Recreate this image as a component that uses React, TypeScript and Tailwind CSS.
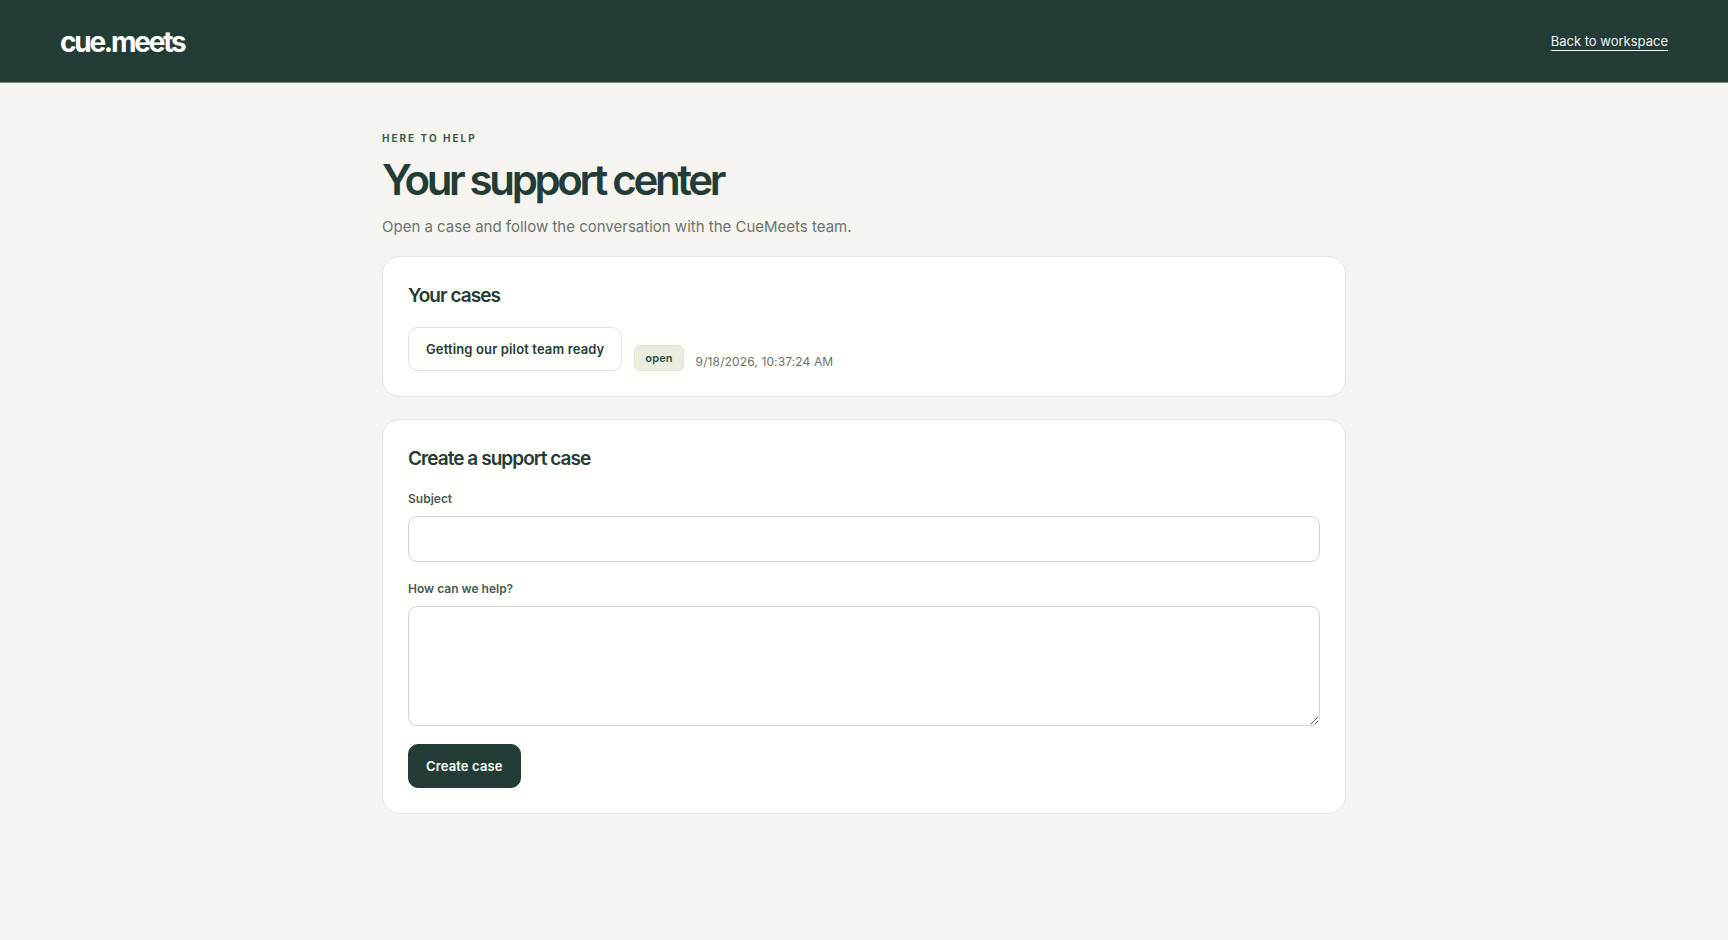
import { useState } from "react";
import type { FormEvent } from "react";

interface SupportCase {
  id: string;
  subject: string;
  status: string;
  updatedAt: string;
}

const cases: SupportCase[] = [
  {
    id: "pilot-team",
    subject: "Getting our pilot team ready",
    status: "open",
    updatedAt: "9/18/2026, 10:37:24 AM",
  },
];

function Header() {
  return (
    <header className="flex items-center justify-between border-b border-[#7c8b82] bg-[#233d36] px-[60px] pt-[21px] pb-[19px]">
      <a href="#home" className="text-[28px] leading-[42px] font-bold tracking-[-0.08em] text-white">
        cue.meets
      </a>
      <a href="#workspace" className="border-b border-white text-[13px] leading-[17px] text-[#f5f4ef]">
        Back to workspace
      </a>
    </header>
  );
}

function CaseRow({ item }: { item: SupportCase }) {
  return (
    <li className="flex flex-wrap items-end gap-3">
      <button
        type="button"
        className="rounded-[10px] border border-[#e2e3dd] px-[17px] py-[11px] text-[13px] leading-5 font-semibold tracking-[0.01em] text-[#233d36]"
      >
        {item.subject}
      </button>
      <span className="rounded-md border border-[#dfe6d6] bg-[#e9eee0] px-[10px] py-[3px] text-[11px] leading-[18px] font-semibold tracking-[0.01em] text-[#2f5142]">
        {item.status}
      </span>
      <time className="text-xs leading-[18px] tracking-[0.01em] text-[#6b746c]">{item.updatedAt}</time>
    </li>
  );
}

export default function App() {
  const [subject, setSubject] = useState("");
  const [message, setMessage] = useState("");

  const handleSubmit = (e: FormEvent) => {
    e.preventDefault();
    setSubject("");
    setMessage("");
  };

  return (
    <div className="min-h-screen bg-[#f5f4ef] font-['Inter',sans-serif] text-[#233d36]">
      <Header />

      <main className="mx-auto max-w-[1012px] px-6 pt-12 pb-16">
        <p className="text-[10px] leading-[14px] font-bold tracking-[0.2em] text-[#3b5c4b] uppercase">Here to help</p>
        <h1 className="mt-[11px] text-[42px] leading-[48px] font-semibold tracking-[-0.08em]">Your support center</h1>
        <p className="mt-[11px] text-[15px] leading-6 text-[#6b746c]">
          Open a case and follow the conversation with the CueMeets team.
        </p>

        {/* CASES */}
        <section className="mt-[17px] rounded-[18px] border border-[#e6e5df] bg-[#fffffb] p-[25px]">
          <h2 className="text-[19px] leading-[27px] font-semibold tracking-[-0.05em]">Your cases</h2>
          <ul className="mt-[18px] flex flex-col gap-3">
            {cases.map((item) => (
              <CaseRow key={item.id} item={item} />
            ))}
          </ul>
        </section>

        {/* NEW CASE */}
        <section className="mt-[22px] rounded-[18px] border border-[#e6e5df] bg-[#fffffb] p-[25px]">
          <h2 className="text-[19px] leading-[27px] font-semibold tracking-[-0.05em]">Create a support case</h2>
          <form onSubmit={handleSubmit} className="mt-[18px] flex flex-col items-start gap-[18px]">
            <div className="flex w-full flex-col gap-2">
              <label htmlFor="subject" className="text-xs leading-[18px] font-semibold text-[#465b50]">
                Subject
              </label>
              <input
                id="subject"
                type="text"
                value={subject}
                onChange={(e) => setSubject(e.target.value)}
                className="h-[46px] w-full rounded-[9px] border border-[#d3d4cf] bg-[#fffffb] px-3 text-sm"
              />
            </div>
            <div className="flex w-full flex-col gap-2">
              <label htmlFor="message" className="text-xs leading-[18px] font-semibold text-[#465b50]">
                How can we help?
              </label>
              <textarea
                id="message"
                value={message}
                onChange={(e) => setMessage(e.target.value)}
                className="h-[120px] w-full resize-y rounded-[9px] border border-[#d3d4cf] bg-[#fffffb] p-3 text-sm"
              />
            </div>
            <button
              type="submit"
              className="rounded-[10px] border border-[#233d36] bg-[#233d36] px-[17px] py-[11px] text-[13px] leading-5 font-semibold tracking-[0.01em] text-[#fffffb]"
            >
              Create case
            </button>
          </form>
        </section>
      </main>
    </div>
  );
}
